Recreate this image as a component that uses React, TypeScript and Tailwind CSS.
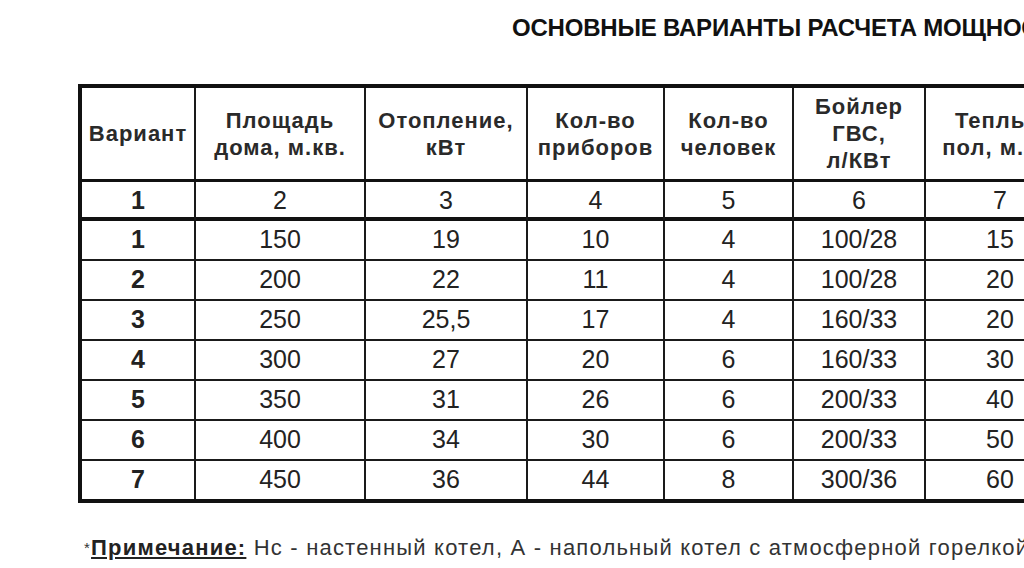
const grid = 'grid grid-cols-[114px_170px_162px_137px_129px_132px_150px]';
const cell = 'flex items-center justify-center text-center border-r-2 border-[#1a1a1a]';

const headers = [
  ['Вариант'],
  ['Площадь', 'дома, м.кв.'],
  ['Отопление,', 'кВт'],
  ['Кол-во', 'приборов'],
  ['Кол-во', 'человек'],
  ['Бойлер', 'ГВС,', 'л/КВт'],
  ['Теплый', 'пол, м.кв.'],
];

const rows = [
  ['1', '150', '19', '10', '4', '100/28', '15'],
  ['2', '200', '22', '11', '4', '100/28', '20'],
  ['3', '250', '25,5', '17', '4', '160/33', '20'],
  ['4', '300', '27', '20', '6', '160/33', '30'],
  ['5', '350', '31', '26', '6', '200/33', '40'],
  ['6', '400', '34', '30', '6', '200/33', '50'],
  ['7', '450', '36', '44', '8', '300/36', '60'],
];

export default function App() {
  return (
    <div className="w-[1024px] h-[568px] overflow-hidden bg-white font-['Liberation_Sans',Arial,sans-serif] text-[#222]">
      <div className="h-[84px] pt-[13px] pl-[512px] whitespace-nowrap">
        <h1 className="text-[24px] leading-[30px] font-bold text-[#111] tracking-[-0.2px]">
          ОСНОВНЫЕ ВАРИАНТЫ РАСЧЕТА МОЩНОСТИ КОТЛА
        </h1>
      </div>

      <div className="ml-[78px] w-max border-4 border-[#111]">
        <div className={`${grid} h-[94px] border-b-[3px] border-[#111]`}>
          {headers.map((lines, i) => (
            <div key={i} className={`${cell} flex-col text-[22px] leading-[27px] tracking-[1px] font-bold text-[#2a2a2a]`}>
              {lines.map((l) => (
                <span key={l} className="whitespace-nowrap">{l}</span>
              ))}
            </div>
          ))}
        </div>

        <div className={`${grid} h-[39px] border-b-4 border-[#111]`}>
          {['1', '2', '3', '4', '5', '6', '7'].map((n, i) => (
            <div key={n} className={`${cell} text-[25px] ${i === 0 ? 'font-bold' : ''}`}>
              {n}
            </div>
          ))}
        </div>

        {rows.map((r, ri) => (
          <div
            key={ri}
            className={`${grid} ${ri === rows.length - 1 ? 'h-[38px]' : 'h-[40px] border-b-2 border-[#1a1a1a]'}`}
          >
            {r.map((v, i) => (
              <div key={i} className={`${cell} text-[25px] ${i === 0 ? 'font-bold' : ''}`}>
                {v}
              </div>
            ))}
          </div>
        ))}
      </div>

      <p className="mt-[31px] pl-[84px] text-[22px] leading-[28px] tracking-[1.2px] whitespace-nowrap text-[#333]">
        <span className="text-[15px] align-top">*</span>
        <span className="font-bold underline underline-offset-2 text-[#222]">Примечание:</span>{' '}
        Нс - настенный котел, А - напольный котел с атмосферной горелкой
      </p>
    </div>
  );
}
